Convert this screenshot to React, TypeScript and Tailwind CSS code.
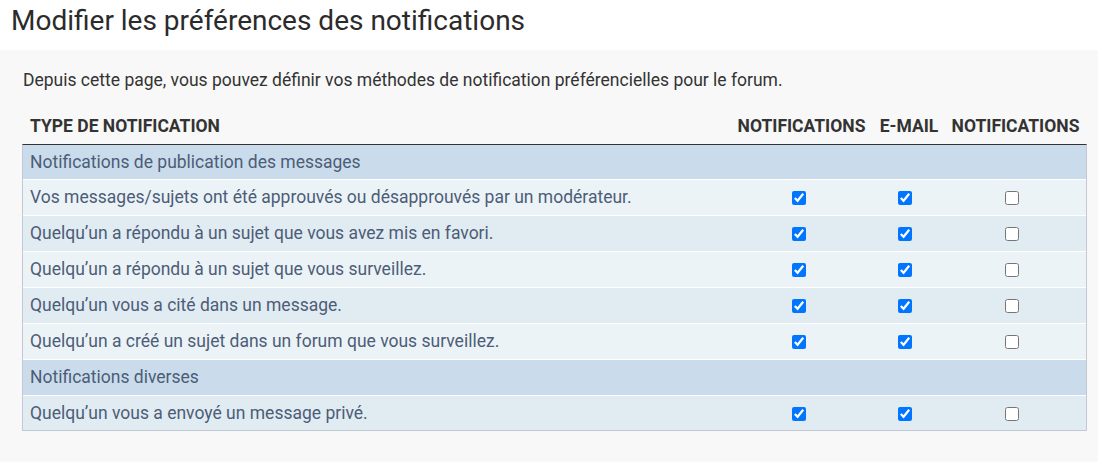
import React from 'react';

type Row = { label: string; section?: boolean; checks?: [boolean, boolean, boolean] };

const rows: Row[] = [
    { label: 'Notifications de publication des messages', section: true },
    { label: 'Vos messages/sujets ont été approuvés ou désapprouvés par un modérateur.', checks: [true, true, false] },
    { label: 'Quelqu’un a répondu à un sujet que vous avez mis en favori.', checks: [true, true, false] },
    { label: 'Quelqu’un a répondu à un sujet que vous surveillez.', checks: [true, true, false] },
    { label: 'Quelqu’un vous a cité dans un message.', checks: [true, true, false] },
    { label: 'Quelqu’un a créé un sujet dans un forum que vous surveillez.', checks: [true, true, false] },
    { label: 'Notifications diverses', section: true },
    { label: 'Quelqu’un vous a envoyé un message privé.', checks: [true, true, false] },
];

const cols = 'grid grid-cols-[707px_143px_72px_141px]';
const boxPad = ['pr-[6px]', 'pr-[8px]', 'pr-[7px]'];

export default function App() {
    let alt = 0;
    return (
        <div className="w-[1098px] h-[462px] overflow-hidden bg-[#f8f8f8] font-['Roboto',sans-serif]">
            <div className="h-[50px] bg-white pl-[11px] pt-[3px]">
                <h1 className="text-[28px] leading-[36px] text-[#2b2b2b]">Modifier les préférences des notifications</h1>
            </div>

            <div className="pt-[18px]">
                <p className="pl-[23px] text-[17.5px] leading-[24px] text-[#333]">
                    Depuis cette page, vous pouvez définir vos méthodes de notification préférencielles pour le forum.
                </p>

                <div className="ml-[22px] w-[1065px] mt-[21px]">
                    <div className={`${cols} px-[1px] h-[24px] mb-[7px] items-center text-[17.5px] font-bold text-[#333] uppercase`}>
                        <div className="pl-[7px]">Type de notification</div>
                        <div className="text-center">Notifications</div>
                        <div className="text-center">E-mail</div>
                        <div className="text-center">Notifications</div>
                    </div>

                    <div className="border-t border-t-[#333] border-x border-b border-x-[#c3c8d3] border-b-[#c3c8d3]">
                        {rows.map((r, i) => {
                            if (r.section) {
                                return (
                                    <div key={i} className={`flex items-center pl-[7px] bg-[#cadceb] text-[17.5px] text-[#4c5d77] ${i > 0 ? 'border-t border-t-white h-[36px]' : 'h-[34px]'}`}>
                                        {r.label}
                                    </div>
                                );
                            }
                            const bg = alt++ % 2 === 0 ? 'bg-[#ecf3f7]' : 'bg-[#e1ebf2]';
                            const last = i === rows.length - 1;
                            return (
                                <div key={i} className={`${cols} ${last ? 'h-[35px]' : 'h-[36px]'} border-t border-t-white ${bg} items-center text-[17.5px] text-[#4c5d77]`}>
                                    <div className="pl-[7px] whitespace-nowrap">{r.label}</div>
                                    {r.checks!.map((c, j) => (
                                        <div key={j} className={`flex justify-center pt-[1px] ${boxPad[j]}`}>
                                            <input type="checkbox" defaultChecked={c} className="m-0 h-[14px] w-[14px]" />
                                        </div>
                                    ))}
                                </div>
                            );
                        })}
                    </div>
                </div>
            </div>
        </div>
    );
}
